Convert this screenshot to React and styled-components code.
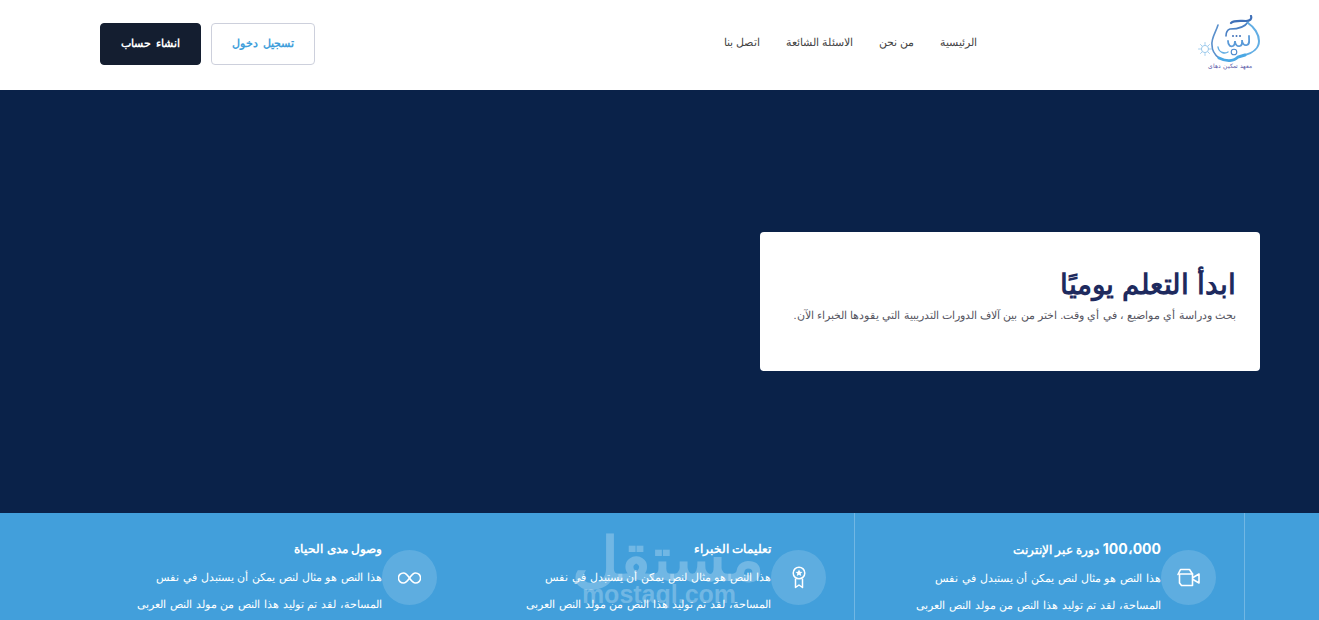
import React from 'react'
import styled, { createGlobalStyle } from 'styled-components'

const GlobalStyle = createGlobalStyle`
  html, body {
    margin: 0;
    padding: 0;
    height: 620px;
    overflow: hidden;
    background: #fff;
  }
  * { box-sizing: border-box; }
`

const Page = styled.div`
  direction: rtl;
  position: relative;
  width: 1319px;
  height: 620px;
  overflow: hidden;
  font-family: "Liberation Sans", "Noto Sans", sans-serif;
`

const Header = styled.header`
  height: 90px;
  background: #fff;
  display: flex;
  align-items: center;
  padding: 0 59px 0 100px;
`

const Logo = styled.svg`
  width: 62px;
  height: 60px;
  margin-left: -2px;
  flex: none;
`

const Nav = styled.nav`
  display: flex;
  gap: 26px;
  margin-right: 223px;
  margin-bottom: 6px;
`

const NavLink = styled.a`
  font-size: 11px;
  color: #444;
  white-space: nowrap;
`

const Actions = styled.div`
  display: flex;
  gap: 10px;
  margin-right: auto;
  margin-bottom: 2px;
`

const Button = styled.button`
  height: 42px;
  width: ${p => (p.$primary ? '101px' : '104px')};
  padding: 0 0 2px;
  font-family: inherit;
  font-size: 11px;
  font-weight: 700;
  word-spacing: 1px;
  border-radius: 4px;
  border: 1px solid ${p => (p.$primary ? '#141e30' : '#cdd0dc')};
  background: ${p => (p.$primary ? '#141e30' : '#fff')};
  color: ${p => (p.$primary ? '#fff' : '#429fdb')};
`

const Hero = styled.section`
  height: 423px;
  background: #0a2249;
  display: flex;
  padding: 142px 59px 0 0;
`

const HeroCard = styled.div`
  width: 500px;
  height: 139px;
  background: #fff;
  border-radius: 4px;
  padding: 33px 24px 0;
`

const HeroTitle = styled.h1`
  margin: 0;
  font-size: 28.4px;
  line-height: 38px;
  font-weight: 700;
  color: #1e2a5e;
`

const HeroText = styled.p`
  margin: 3px 0 0;
  font-size: 11px;
  line-height: 18px;
  word-spacing: 0.2px;
  color: #55555f;
  white-space: nowrap;
`

const Features = styled.section`
  height: 220px;
  background: #429fdb;
  display: grid;
  grid-template-columns: repeat(3, 390px);
  padding-right: 74px;
`

const Feature = styled.div`
  display: flex;
  padding: 27px 28px 0 0;
  border-right: 1px solid rgba(255, 255, 255, 0.25);
  &:last-child {
    border-right: none;
  }
`

const IconCircle = styled.div`
  width: 55px;
  height: 55px;
  margin-top: 10px;
  flex: none;
  border-radius: 50%;
  background: rgba(255, 255, 255, 0.15);
  display: flex;
  align-items: center;
  justify-content: center;
`

const FeatureBody = styled.div`
  color: #fff;
`

const FeatureTitle = styled.h3`
  margin: 0;
  font-size: 12px;
  line-height: 18px;
  font-weight: 700;
`

const Digits = styled.span`
  font-family: Inter, "Liberation Sans", sans-serif;
  font-size: 14px;
`

const FeatureText = styled.p`
  margin: 6px 0 0;
  font-size: 11px;
  line-height: 27px;
  word-spacing: 0.7px;
  width: 252px;
`

const Watermark = styled.div`
  position: absolute;
  left: 578px;
  top: 530px;
  width: 162px;
  text-align: center;
  direction: ltr;
  color: rgba(255, 255, 255, 0.25);
  pointer-events: none;
`

const WatermarkAr = styled.div`
  font-size: 60px;
  line-height: 60px;
  margin-bottom: -8px;
  font-weight: 700;
  transform: scaleX(1.07);
`

const WatermarkEn = styled.div`
  font-size: 25px;
  line-height: 24px;
  font-weight: 700;
`

const VideoIcon = () => (
  <svg width="23" height="19" viewBox="0 0 23 19" fill="none" stroke="#fff" strokeWidth="1.6" strokeLinejoin="round" strokeLinecap="round">
    <path d="M2.500 6h13v11.500H4.500l-2-2.500z" />
    <path d="M1 6.500 3.500 1.500h9L15.500 6" />
    <path d="M16 9.500l6-3.500v9l-6-3.500" />
  </svg>
)

const MedalIcon = () => (
  <svg width="14" height="23" viewBox="0 0 14 23" fill="none" stroke="#fff" strokeWidth="1.5" strokeLinejoin="round">
    <circle cx="7" cy="7" r="5.800" />
    <path d="M7 3.500l1.100 2.200 2.400.3-1.800 1.600.5 2.400L7 8.800l-2.200 1.200.5-2.400L3.500 6l2.400-.3z" fill="#fff" stroke="none" />
    <path d="M3.500 12.500v9L7 19l3.500 2.500v-9" />
  </svg>
)

const InfinityIcon = () => (
  <svg width="23" height="12" viewBox="0 0 24 13" fill="none" stroke="#fff" strokeWidth="1.7">
    <path d="M12 6.500C10 3.500 8 1 5.500 1a5.500 5.500 0 0 0 0 11C8 12 10 9.500 12 6.500c2-3 4-5.500 6.500-5.500a5.500 5.500 0 0 1 0 11C16 12 14 9.500 12 6.500z" />
  </svg>
)

const LogoMark = () => (
  <Logo viewBox="0 0 62 60" fill="none" strokeLinecap="round">
    <path d="M53 1c1 3-1 5-5 5-6 0-12-1-15 2" stroke="#3f70b8" strokeWidth="2.200" />
    <path d="M50 7c-3 5-11 7-18 7-3 1-4 4-4 7" stroke="#4a80c4" strokeWidth="1.600" />
    <path d="M20 10c-2 7-7 13-6 20 0 5 3 10 7 13" stroke="#5a90cc" strokeWidth="1.600" />
    <path d="M50 8c6 4 11 11 11 18 0 7-6 12-14 14" stroke="#62aee4" strokeWidth="2" />
    <path d="M20 32c1 6 7 7 10 5" stroke="#62aee4" strokeWidth="1.400" />
    <path d="M30 26c0 5 3 6 5 5s2-4 2-5c0 3 2 6 5 5s2-4 2-6c0 3 2 6 5 5s2-4 2-9" stroke="#5a9ad8" strokeWidth="1.800" />
    <path d="M21 43c8 4 15 3 19-1l7-2" stroke="#4aa8e4" strokeWidth="3" />
    <circle cx="36" cy="37" r="2.800" fill="#fff" stroke="#4a88cc" strokeWidth="1.100" />
    <circle cx="35" cy="21" r="1" fill="#3f70b8" />
    <circle cx="38.500" cy="21" r="1" fill="#3f70b8" />
    <circle cx="42" cy="21" r="1" fill="#3f70b8" />
    <circle cx="7" cy="34" r="3.600" stroke="#9ccaec" strokeWidth="1" />
    <path d="M7 27.500v2M7 38.500v2M.5 34h2M11.500 34h2M2.500 29.500l1.400 1.400M10.100 37.100l1.400 1.400M11.500 29.500l-1.400 1.400M3.900 37.100l-1.400 1.400" stroke="#9ccaec" strokeWidth="0.900" />
    <text x="32" y="53" textAnchor="middle" fontSize="6" fill="#5a5aa8" fontFamily="Liberation Sans, sans-serif">معهد تمكين دهاي</text>
  </Logo>
)

const features = [
  { key: 'courses', title: <><Digits>100،000</Digits> دورة عبر الإنترنت</>, icon: <VideoIcon /> },
  { key: 'experts', title: 'تعليمات الخبراء', icon: <MedalIcon /> },
  { key: 'access', title: 'وصول مدى الحياة', icon: <InfinityIcon /> },
]

const App = () => {
  return (
    <Page>
      <GlobalStyle />
      <Header>
        <LogoMark />
        <Nav>
          <NavLink>الرئيسية</NavLink>
          <NavLink>من نحن</NavLink>
          <NavLink>الاسئلة الشائعة</NavLink>
          <NavLink>اتصل بنا</NavLink>
        </Nav>
        <Actions>
          <Button>تسجيل دخول</Button>
          <Button $primary>انشاء حساب</Button>
        </Actions>
      </Header>
      <Hero>
        <HeroCard>
          <HeroTitle>ابدأ التعلم يوميًا</HeroTitle>
          <HeroText>بحث ودراسة أي مواضيع ، في أي وقت. اختر من بين آلاف الدورات التدريبية التي يقودها الخبراء الآن.</HeroText>
        </HeroCard>
      </Hero>
      <Features>
        {features.map(f => (
          <Feature key={f.key}>
            <IconCircle>{f.icon}</IconCircle>
            <FeatureBody>
              <FeatureTitle>{f.title}</FeatureTitle>
              <FeatureText>هذا النص هو مثال لنص يمكن أن يستبدل في نفس المساحة، لقد تم توليد هذا النص من مولد النص العربى</FeatureText>
            </FeatureBody>
          </Feature>
        ))}
      </Features>
      <Watermark>
        <WatermarkAr>مستقل</WatermarkAr>
        <WatermarkEn>mostaql.com</WatermarkEn>
      </Watermark>
    </Page>
  )
}

export default App
